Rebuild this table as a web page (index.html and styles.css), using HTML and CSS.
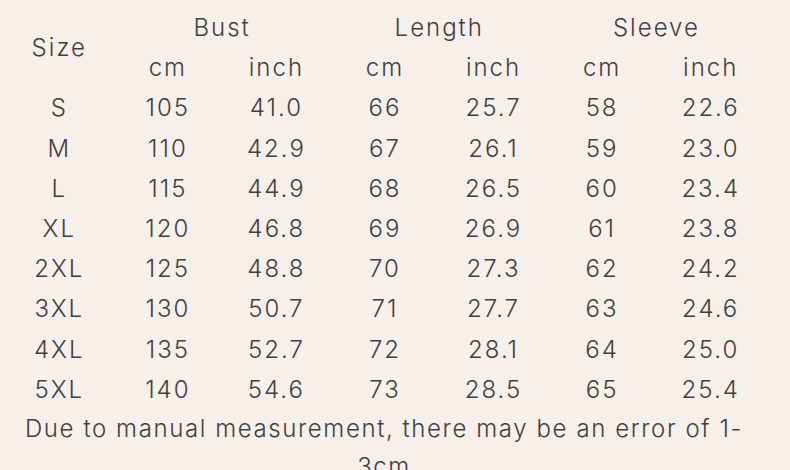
FILE: index.html
```html
<!DOCTYPE html>
<html>
<head>
<meta charset="utf-8">
<link rel="stylesheet" href="styles.css">
</head>
<body>
<div class="wrap">
<table class="size-table">
<thead>
<tr><th rowspan="2">Size</th><th colspan="2">Bust</th><th colspan="2">Length</th><th colspan="2">Sleeve</th></tr>
<tr><th>cm</th><th>inch</th><th>cm</th><th>inch</th><th>cm</th><th>inch</th></tr>
</thead>
<tbody>
<tr><td>S</td><td>105</td><td>41.0</td><td>66</td><td>25.7</td><td>58</td><td>22.6</td></tr>
<tr><td>M</td><td>110</td><td>42.9</td><td>67</td><td>26.1</td><td>59</td><td>23.0</td></tr>
<tr><td>L</td><td>115</td><td>44.9</td><td>68</td><td>26.5</td><td>60</td><td>23.4</td></tr>
<tr><td>XL</td><td>120</td><td>46.8</td><td>69</td><td>26.9</td><td>61</td><td>23.8</td></tr>
<tr><td>2XL</td><td>125</td><td>48.8</td><td>70</td><td>27.3</td><td>62</td><td>24.2</td></tr>
<tr><td>3XL</td><td>130</td><td>50.7</td><td>71</td><td>27.7</td><td>63</td><td>24.6</td></tr>
<tr><td>4XL</td><td>135</td><td>52.7</td><td>72</td><td>28.1</td><td>64</td><td>25.0</td></tr>
<tr><td>5XL</td><td>140</td><td>54.6</td><td>73</td><td>28.5</td><td>65</td><td>25.4</td></tr>
</tbody>
</table>
<p class="note">Due to manual measurement, there may be an error of 1-3cm</p>
</div>
</body>
</html>
```

FILE: styles.css
```css
html, body {
  margin: 0;
  padding: 0;
  background: #f6efea;
}
body {
  font-family: Inter, "Open Sans", sans-serif;
  font-weight: 300;
  color: #404040;
}
.wrap {
  padding: 8px 0 0 4px;
  width: 760px;
}
.size-table {
  width: 760px;
  table-layout: fixed;
  border-collapse: collapse;
}
.size-table th,
.size-table td {
  height: 40.2px;
  padding: 0;
  text-align: center;
  vertical-align: middle;
  font-size: 24px;
  font-weight: 300;
  letter-spacing: 2px;
  text-indent: 2px;
  line-height: 1;
}
.note {
  margin: 0;
  padding-top: 0;
  text-align: center;
  font-size: 24px;
  letter-spacing: 1.6px;
  line-height: 38px;
  width: 760px;
}
```
